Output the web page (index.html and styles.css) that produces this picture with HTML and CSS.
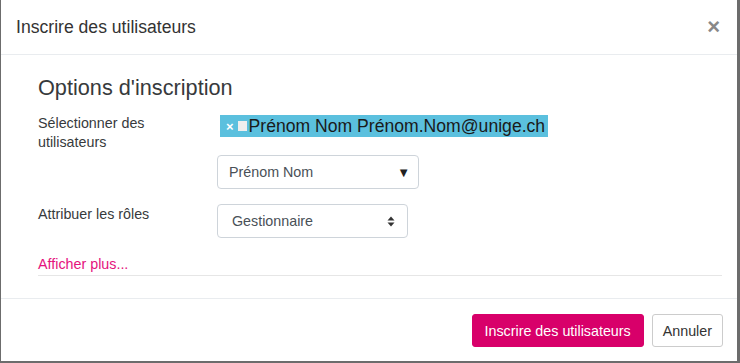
FILE: index.html
```html
<!DOCTYPE html>
<html lang="fr">
<head>
  <meta charset="UTF-8" />
  <meta name="viewport" content="width=device-width, initial-scale=1.0" />
  <title>Inscrire des utilisateurs</title>
  <link rel="stylesheet" href="styles.css">
</head>
<body>
  <div class="modal">
    <div class="modal-header">
      <h5 class="modal-title">Inscrire des utilisateurs</h5>
      <span class="close">&times;</span>
    </div>
    <div class="modal-body">
      <h3 class="legend">Options d'inscription</h3>
      <div class="form-row">
        <label class="form-label">Sélectionner des utilisateurs</label>
        <div class="form-field">
          <div class="tags">
            <span class="tag">
              <span class="tag-remove">&times;</span>
              <span class="tag-pic"></span>
              <span class="tag-text">Prénom Nom Prénom.Nom@unige.ch</span>
            </span>
          </div>
          <div class="select select-search">
            <span>Prénom Nom</span>
            <span class="caret">&#9660;</span>
          </div>
        </div>
      </div>
      <div class="form-row">
        <label class="form-label">Attribuer les rôles</label>
        <div class="form-field">
          <div class="select select-role">
            <span>Gestionnaire</span>
            <svg class="updown" width="8" height="11" viewBox="0 0 8 11">
              <path d="M4 0.5 L7.5 4.5 H0.5 Z M4 10.5 L7.5 6.5 H0.5 Z" fill="#333"/>
            </svg>
          </div>
        </div>
      </div>
      <a class="more" href="#">Afficher plus...</a>
      <hr class="sep">
    </div>
    <div class="modal-footer">
      <button class="btn btn-primary">Inscrire des utilisateurs</button>
      <button class="btn btn-secondary">Annuler</button>
    </div>
  </div>
</body>
</html>
```

FILE: styles.css
```css
body {
  margin: 0;
  background: #6c6c6c;
  font-family: "Liberation Sans", Arial, sans-serif;
  color: #373a3c;
}
.modal {
  margin-left: 1px;
  width: 736px;
  height: 361px;
  background: #fff;
  display: flex;
  flex-direction: column;
}
.modal-header {
  height: 55px;
  box-sizing: border-box;
  border-bottom: 1px solid #e9ecef;
  padding: 0 17px 0 15px;
  display: flex;
  align-items: center;
  justify-content: space-between;
}
.modal-title {
  margin: 0;
  font-size: 17.6px;
  font-weight: normal;
  color: #333;
}
.close {
  font-size: 22px;
  font-weight: bold;
  color: #888;
  line-height: 1;
}
.modal-body {
  flex: 1;
  padding: 20px 15px 0 37px;
}
.legend {
  margin: 0 0 12px;
  font-size: 21.7px;
  font-weight: normal;
  line-height: 26px;
  color: #373a3c;
}
.form-row {
  display: flex;
  margin-bottom: 15px;
}
.form-label {
  width: 149px;
  margin-right: 30px;
  font-size: 14.3px;
  line-height: 19px;
  padding-top: 1px;
}
.tags {
  padding: 2px 0 0 3px;
  margin-bottom: 18px;
}
.tag {
  display: inline-flex;
  align-items: center;
  height: 22px;
  background: #5bc0de;
  padding: 0 3px 0 6px;
}
.tag-remove {
  color: #fff;
  font-weight: bold;
  font-size: 13px;
  margin-right: 4px;
}
.tag-pic {
  width: 9px;
  height: 10px;
  background: #eee;
  margin-right: 2px;
}
.tag-text {
  font-size: 17.6px;
  color: #1a1a1a;
}
.select {
  box-sizing: border-box;
  height: 34px;
  border: 1px solid #ced4da;
  border-radius: 4px;
  display: flex;
  align-items: center;
  justify-content: space-between;
  font-size: 14.3px;
  color: #495057;
}
.select-search {
  width: 202px;
  padding: 0 8px 0 11px;
}
.caret {
  color: #222;
  font-size: 13px;
}
.select-role {
  width: 191px;
  padding: 0 12px 0 14px;
}
.more {
  display: block;
  margin-top: 18px;
  font-size: 14.3px;
  color: #e5127d;
  text-decoration: none;
}
.sep {
  margin: 3px 0 0;
  border: 0;
  border-top: 1px solid #e6e6e6;
}
.modal-footer {
  box-sizing: border-box;
  height: 63px;
  border-top: 1px solid #e9ecef;
  padding: 15px 14px 0;
  display: flex;
  justify-content: flex-end;
  gap: 8px;
}
.btn {
  height: 33px;
  font-family: inherit;
  font-size: 14.3px;
  border-radius: 3px;
  padding: 0 10px;
}
.btn-primary {
  padding: 0 12px;
  background: #d8006a;
  border: 1px solid #d8006a;
  color: #fff;
}
.btn-secondary {
  background: #fff;
  border: 1px solid #ccc;
  color: #333;
}
```
